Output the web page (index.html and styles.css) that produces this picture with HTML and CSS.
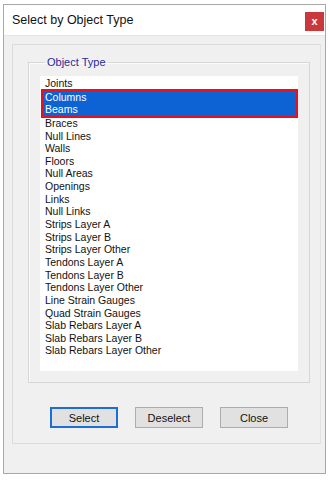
FILE: index.html
```html
<!DOCTYPE html>
<html lang="en">
<head>
    <meta charset="UTF-8">
    <meta name="viewport" content="width=device-width, initial-scale=1.0">
    <title>Select by Object Type</title>
    <link rel="stylesheet" href="styles.css">
</head>
<body>

    <!-- Dialog window -->
    <div class="dialog">
        <div class="title-bar">
            <span class="title">Select by Object Type</span>
            <div class="close-x">x</div>
        </div>

        <div class="dialog-body">
            <div class="panel">
                <fieldset class="group">
                    <legend>Object Type</legend>
                    <div class="list-box">
                        <div class="item">Joints</div>
                        <div class="picked">
                            <div class="item selected">Columns</div>
                            <div class="item selected">Beams</div>
                        </div>
                        <div class="item">Braces</div>
                        <div class="item">Null Lines</div>
                        <div class="item">Walls</div>
                        <div class="item">Floors</div>
                        <div class="item">Null Areas</div>
                        <div class="item">Openings</div>
                        <div class="item">Links</div>
                        <div class="item">Null Links</div>
                        <div class="item">Strips Layer A</div>
                        <div class="item">Strips Layer B</div>
                        <div class="item">Strips Layer Other</div>
                        <div class="item">Tendons Layer A</div>
                        <div class="item">Tendons Layer B</div>
                        <div class="item">Tendons Layer Other</div>
                        <div class="item">Line Strain Gauges</div>
                        <div class="item">Quad Strain Gauges</div>
                        <div class="item">Slab Rebars Layer A</div>
                        <div class="item">Slab Rebars Layer B</div>
                        <div class="item">Slab Rebars Layer Other</div>
                    </div>
                </fieldset>

                <div class="buttons">
                    <button class="btn focused">Select</button>
                    <button class="btn">Deselect</button>
                    <button class="btn">Close</button>
                </div>
            </div>
        </div>
    </div>

</body>
</html>
```

FILE: styles.css
```css
body {
    margin: 0;
    background-color: #fff;
    font-family: "Liberation Sans", Arial, sans-serif;
}

.dialog {
    margin: 4px 0 0 3px;
    width: 321px;
    height: 468px;
    border: 1px solid #a8a8a8;
    display: flex;
    flex-direction: column;
    background-color: #f0f0f0;
}

.title-bar {
    height: 30px;
    background-color: #fff;
    display: flex;
    align-items: center;
    justify-content: space-between;
    padding-left: 8px;
    border-bottom: 1px solid #e6e6e6;
}

.title {
    font-size: 12.5px;
    color: #111;
}

.close-x {
    width: 19px;
    height: 19px;
    margin: 2px 1px 0 0;
    background-color: #c9393c;
    color: #fff;
    font-size: 11px;
    font-weight: bold;
    display: flex;
    justify-content: center;
    align-items: center;
}

.dialog-body {
    flex: 1;
    padding: 8px 0 0 8px;
}

.panel {
    width: 309px;
    height: 400px;
    border: 1px solid #dcdcdc;
    border-right-color: #e2e2e2;
    box-sizing: border-box;
    padding: 11px 12px 0 15px;
}

.group {
    margin: 0;
    width: 282px;
    height: 327px;
    box-sizing: border-box;
    border: 1px solid #d6d6d6;
    box-shadow: inset 1px 1px 0 #fbfbfb;
    padding: 8px 11px 11px 11px;
}

.group legend {
    font-size: 11px;
    color: #1f2a9c;
    padding: 0 2px;
    margin-left: 5px;
}

.list-box {
    background-color: #fff;
    height: 100%;
    padding-top: 1px;
    box-sizing: border-box;
}

.item {
    font-size: 10.5px;
    height: 12.65px;
    line-height: 12.65px;
    padding-left: 5px;
    color: #111;
    white-space: nowrap;
}

.picked {
    border: 2px solid #e3121c;
    margin: -1px 0 -1px 1px;
    background-color: #0d63d3;
}

.item.selected {
    color: #fff;
    padding-left: 2px;
}

.buttons {
    display: flex;
    gap: 17px;
    padding: 24px 0 0 22px;
}

.btn {
    width: 68px;
    height: 21px;
    font-family: "Liberation Sans", Arial, sans-serif;
    font-size: 11px;
    color: #111;
    background-color: #e1e1e1;
    border: 1px solid #adadad;
    padding: 0;
}

.btn.focused {
    border: 2px solid #1c6ed5;
}
```
